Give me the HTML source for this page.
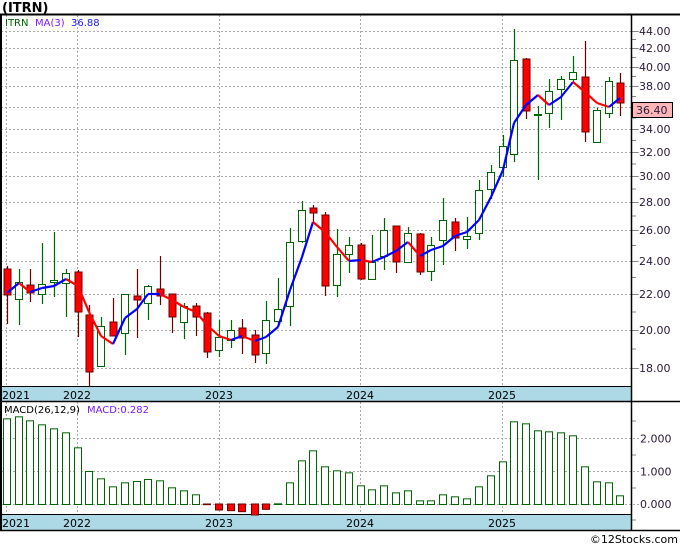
<!DOCTYPE html>
<html><head><meta charset="utf-8">
<style>
html,body{margin:0;padding:0;background:#fff;width:680px;height:546px;overflow:hidden}
svg{display:block}
text{font-family:"DejaVu Sans","Liberation Sans",sans-serif}
</style></head>
<body>
<svg id="s" width="680" height="546" xmlns="http://www.w3.org/2000/svg">
<text x="2" y="12" font-size="13" font-weight="bold" fill="#000">(ITRN)</text>
<g id="g"></g>
<text x="5" y="26" font-size="10" fill="#006400">ITRN</text>
<text x="35" y="26" font-size="10" fill="#7a1aff">MA(3)</text>
<text x="71" y="26" font-size="10" fill="#1a1aff">36.88</text>
<text x="4" y="413" font-size="10" fill="#000">MACD(26,12,9)</text>
<text x="87" y="413" font-size="10" fill="#7a1aff">MACD:0.282</text>
<text x="678" y="543" font-size="11" fill="#000" text-anchor="end">©12Stocks.com</text>
</svg>
<script>
var g=document.getElementById('g'),h='';
function L(x1,y1,x2,y2,c,w,d){h+='<line x1="'+x1+'" y1="'+y1+'" x2="'+x2+'" y2="'+y2+'" stroke="'+c+'" stroke-width="'+(w||1)+'"'+(d?' stroke-dasharray="'+d+'"':'')+'/>';}
function R(x,y,w,ht,f,s){h+='<rect x="'+x+'" y="'+y+'" width="'+w+'" height="'+ht+'" fill="'+f+'" stroke="'+(s||'none')+'"/>';}
function T(x,y,t,sz,c,a){h+='<text x="'+x+'" y="'+y+'" font-size="'+sz+'" fill="'+c+'"'+(a?' text-anchor="'+a+'"':'')+'>'+t+'</text>';}
R(1,387,630,14,'#add8e6');R(1,515,630,15,'#add8e6');
var py=[[44,31],[42,48],[40,67],[38,86],[36,107],[34,129],[32,152],[30,176],[28,202],[26,230],[24,261],[22,294],[20,330],[18,368]];
py.forEach(function(p){L(1,p[1]+.5,640,p[1]+.5,'#aaa',1,'2,2');if(p[0]!=36)T(639,p[1]+4,p[0].toFixed(2),11,'#2a1a3a');});
[[438.5,'2.000'],[471.5,'1.000']].forEach(function(p){L(1,p[0],640,p[0],'#aaa',1,'2,2');T(640,p[0]+4,p[1],11,'#2a1a3a');});
L(1,504.5,640,504.5,'#aaa',1,'2,2');T(640,508,'0.000',11,'#2a1a3a');
var yx=[[6,'2021',2],[77,'2022',63],[219,'2023',205],[360,'2024',346],[502,'2025',488]];
yx.forEach(function(p){L(p[0]+.5,15,p[0]+.5,387,'#aaa',1,'2,2');L(p[0]+.5,402,p[0]+.5,515,'#aaa',1,'2,2');T(p[2],399,p[1],11,'#000');T(p[2],527,p[1],11,'#000');});
for(var i=0;i<py.length-1;i++){var m=(py[i][1]+py[i+1][1])/2;L(632,m,636,m,'#888');}
py.forEach(function(p){L(632,p[1]+.5,638,p[1]+.5,'#888');});
[421,455,488,520].forEach(function(y){L(632,y,636,y,'#888');});
L(0,14.5,680,14.5,'#000',2);L(1,14,1,531,'#000',2);L(631.5,14,631.5,531,'#000',1.5);
L(0,386.5,632,386.5,'#000');L(0,401.5,680,401.5,'#000',1.5);L(0,514.5,632,514.5,'#000');L(0,530.5,680,530.5,'#000',1.5);
var C=[[7,'r',269,295,266,324],[19,'g',282,299,269,325],[30,'r',285,293,269,302],[42,'g',284,294,243,304],[54,'g',280,282,232,297],[66,'g',273,283,269,317],[78,'r',272,312,270,337],[89,'r',315,372,305,387],[101,'g',326,366,317,367],[113,'r',322,336,298,336],[125,'g',294,333,294,355],[137,'r',296,300,269,338],[148,'g',286,303,285,320],[160,'r',289,296,256,305],[172,'r',294,317,294,333],[184,'g',306,322,303,339],[196,'r',306,317,303,336],[207,'r',313,352,312,358],[219,'g',337,350,320,357],[231,'g',330,340,320,348],[242,'r',328,338,319,354],[255,'r',335,355,330,363],[266,'g',320,353,301,364],[278,'g',309,321,278,325],[290,'g',242,306,228,326],[302,'g',210,241,201,243],[313,'r',208,213,205,222],[325,'r',215,286,212,296],[337,'g',254,285,229,297],[349,'g',245,254,237,273],[361,'r',245,279,243,280],[372,'g',262,279,235,280],[384,'g',230,256,218,270],[396,'r',226,262,226,273],[408,'g',233,262,227,263],[420,'r',234,272,233,275],[431,'g',245,271,237,281],[443,'g',220,240,198,265],[455,'r',222,238,218,251],[467,'g',236,239,217,249],[479,'g',190,233,180,240],[491,'g',172,189,165,199],[503,'g',146,167,135,177],[514,'g',60,154,29,162],[526,'r',59,111,58,119],[538,'g',114,115,106,180],[549,'g',91,113,79,128],[561,'g',79,89,76,120],[573,'g',72,79,56,83],[585,'r',77,132,41,142],[597,'g',110,142,108,143],[609,'g',81,113,77,118],[620,'r',83,103,73,116]];
C.forEach(function(c){var x=c[0],col=c[1]=='r'?'#6b0000':'#006400';L(x+.5,c[4],x+.5,c[5],col,1.2);
 if(c[1]=='r')R(x-3,c[2],7,Math.max(1,c[3]-c[2]),'#ff0000','#6b0000');else R(x-3.5,c[2]+.5,7,Math.max(1,c[3]-c[2]),'#fff','#006400');});
var M=[[7,293],[19,283],[30,292],[42,288],[54,286],[66,279],[78,286],[89,312],[101,336],[113,344],[125,318],[137,309],[148,294],[160,294],[172,300],[184,307],[196,312],[207,325],[219,336],[231,340],[242,336],[255,341],[266,337],[278,327],[290,290],[302,257],[313,222],[325,232],[337,247],[349,261],[361,260],[372,262],[384,257],[396,251],[408,242],[420,256],[431,250],[443,246],[455,236],[467,232],[479,220],[491,197],[503,170],[514,123],[526,105],[538,95],[549,105],[561,97],[573,82],[585,92],[597,103],[609,107],[620,98]];
for(var i=0;i<M.length-1;i++){L(M[i][0],M[i][1],M[i+1][0],M[i+1][1],M[i+1][1]>M[i][1]?'#ff0000':'#0000ff',2.2);}
var V=[115,109,121,133,145,157,202,273,295,319,307,303,297,301,322,331,343,374,390,392,395,405,388,370,307,241,211,259,271,277,316,328,316,337,331,361,361,343,349,355,319,286,244,124,130,151,154,157,166,259,304,307,346];
V.forEach(function(v,i){var x=C[i][0],y=380+v/3,z=504;
 if(y>z){R(x-3.5,z,7,y-z,'#ff0000','#6b0000');}
 else R(x-3.5,y+.5,7,z-y,'#fff','#006400');});
g.innerHTML=h;
g.insertAdjacentHTML('beforeend','<rect x="632.5" y="102.5" width="40" height="15" fill="#ffb6b6" stroke="#000"/><text x="636" y="114" font-size="11" fill="#2a1a3a">36.40</text>');
</script>
</body></html>
